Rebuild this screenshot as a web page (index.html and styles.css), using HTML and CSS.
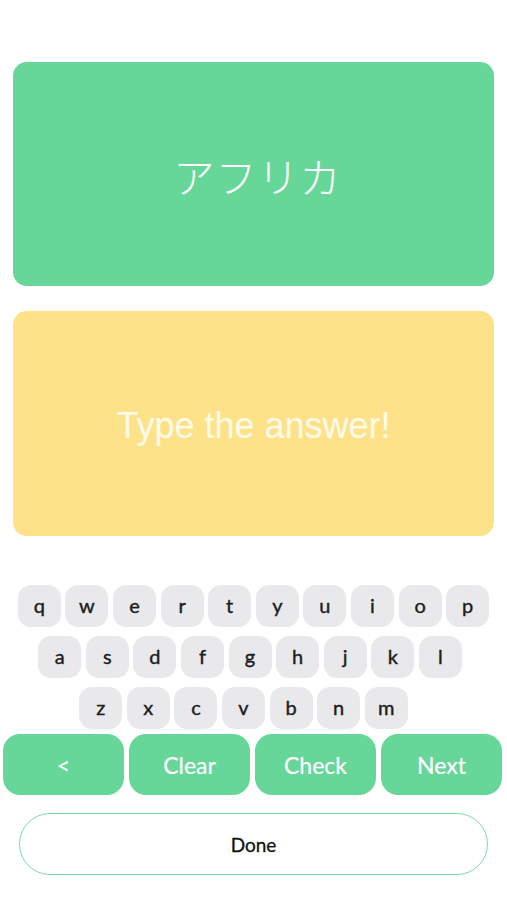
FILE: index.html
```html
<!DOCTYPE html>
<html lang="ja">
<head>
	<meta charset="UTF-8">
	<title>Quiz</title>
	<link rel="stylesheet" href="styles.css">
</head>
<body>
	<div class="app">
		<div class="card question">アフリカ</div>
		<div class="card answer">Type the answer!</div>

		<div class="keyboard">
			<div class="row">
				<span class="key">q</span><span class="key">w</span><span class="key">e</span><span class="key">r</span><span class="key">t</span><span class="key">y</span><span class="key">u</span><span class="key">i</span><span class="key">o</span><span class="key">p</span>
			</div>
			<div class="row row2">
				<span class="key">a</span><span class="key">s</span><span class="key">d</span><span class="key">f</span><span class="key">g</span><span class="key">h</span><span class="key">j</span><span class="key">k</span><span class="key">l</span>
			</div>
			<div class="row row3">
				<span class="key">z</span><span class="key">x</span><span class="key">c</span><span class="key">v</span><span class="key">b</span><span class="key">n</span><span class="key">m</span>
			</div>
		</div>

		<div class="actions">
			<button class="action">&lt;</button>
			<button class="action">Clear</button>
			<button class="action">Check</button>
			<button class="action">Next</button>
		</div>

		<button class="done">Done</button>
	</div>
</body>
</html>
```

FILE: styles.css
```css
*{
	margin: 0;
	padding: 0;
	box-sizing: border-box;
}
body{
	background: #fff;
	font-family: "Lato", "Noto Sans", sans-serif;
	color: #222;
}
.app{
	width: 507px;
	padding-top: 62px;
}
.card{
	display: flex;
	align-items: center;
	justify-content: center;
	margin: 0 13px;
	height: 224px;
	border-radius: 14px;
	color: #fff;
}
.question{
	background: #67d699;
	font-family: "Noto Sans CJK JP", sans-serif;
	font-weight: 300;
	font-size: 41px;
	letter-spacing: 1px;
	padding-left: 8px;
	padding-top: 2px;
}
.answer{
	margin-top: 25px;
	height: 225px;
	background: #fde28a;
	font-family: "Liberation Sans", Arial, sans-serif;
	font-size: 36px;
	color: #fffbea;
	padding-top: 4px;
}
.keyboard{
	margin-top: 49px;
}
.row{
	display: flex;
	justify-content: center;
	gap: 4.6px;
	margin-bottom: 9px;
}
.row2{
	padding-right: 7px;
}
.row3{
	padding-right: 20px;
}
.key{
	display: flex;
	align-items: center;
	justify-content: center;
	width: 43px;
	height: 42px;
	border-radius: 13px;
	background: #e9e9eb;
	font-size: 20px;
	color: #1d1d1f;
	padding-bottom: 2px;
	-webkit-text-stroke: 0.4px #1d1d1f;
}
.actions{
	display: flex;
	gap: 5px;
	padding: 0 5px 0 3px;
	margin-top: -4px;
}
.action{
	flex: 1;
	height: 61px;
	border: none;
	border-radius: 17px;
	background: #67d699;
	color: #fff;
	font-family: "Lato", "Noto Sans", sans-serif;
	font-size: 23px;
	-webkit-text-stroke: 0.2px #fff;
}
.done{
	display: block;
	margin: 18px 0 0 19px;
	width: 469px;
	height: 62px;
	border: 1.5px solid #7edcab;
	border-radius: 31px;
	background: #fff;
	font-family: "Lato", "Noto Sans", sans-serif;
	font-size: 19px;
	color: #111;
	-webkit-text-stroke: 0.3px #111;
}
```
